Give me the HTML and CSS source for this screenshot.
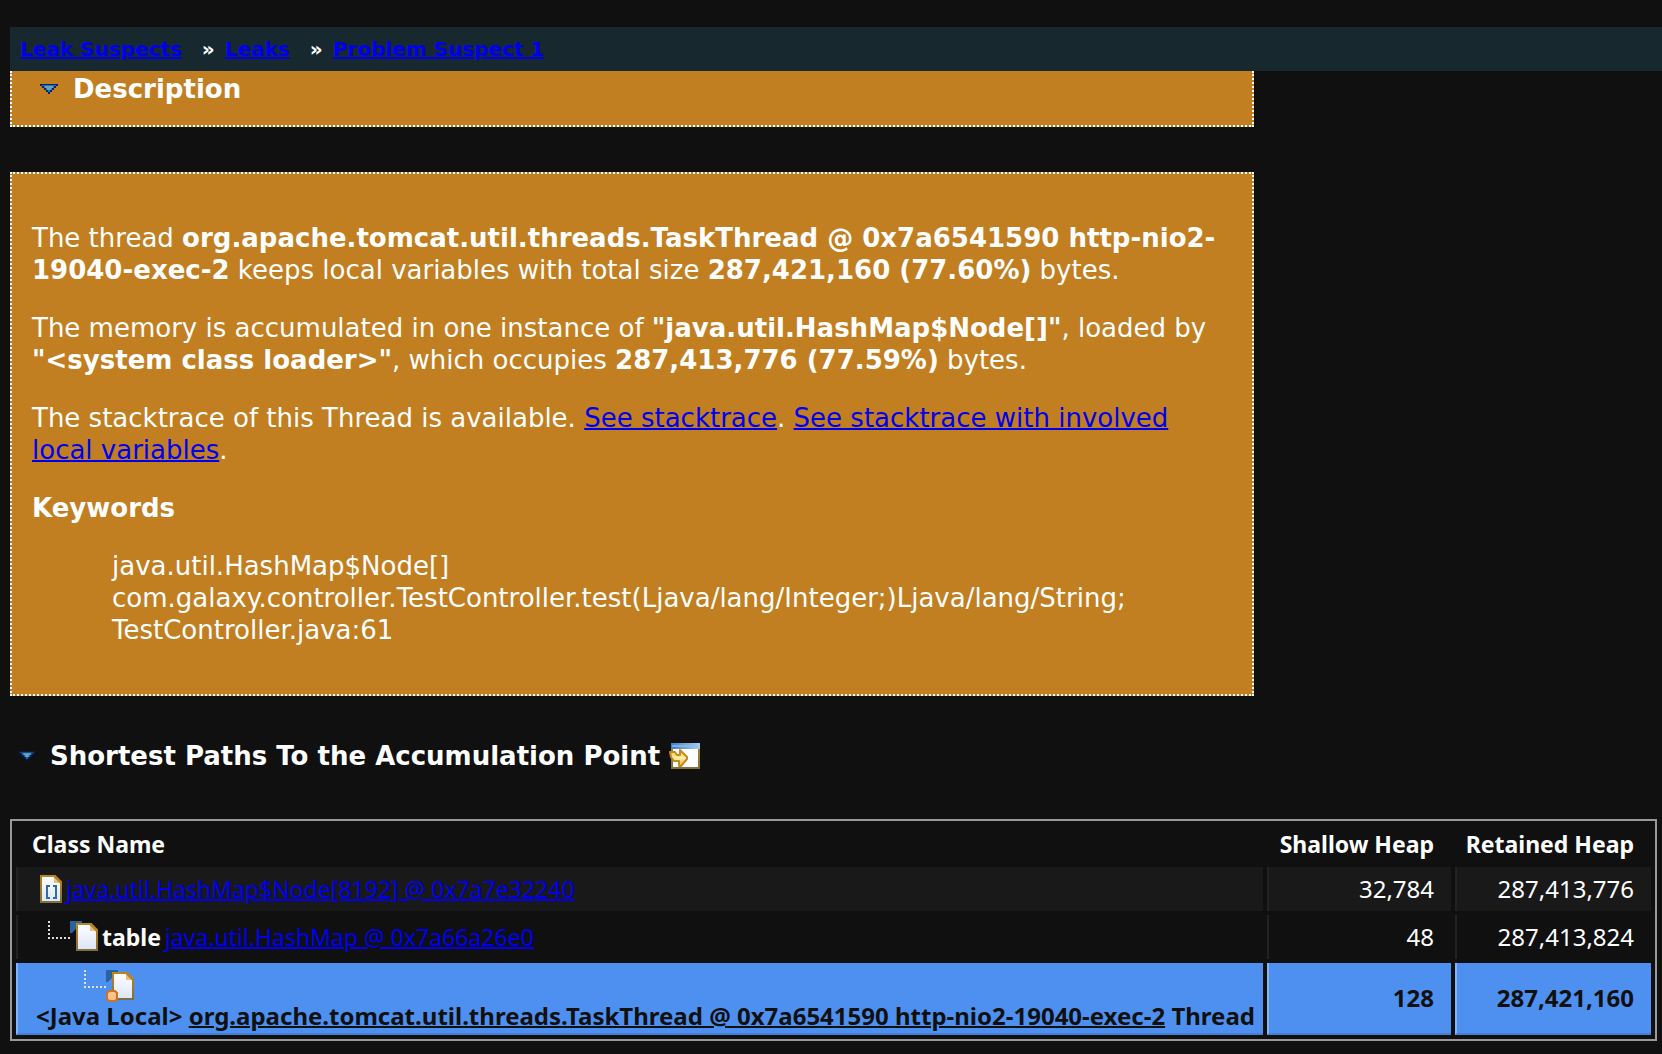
FILE: index.html
```
<!DOCTYPE html>
<html lang="en">
<head>
<meta charset="utf-8">
<title>Problem Suspect 1</title>
<link rel="stylesheet" href="styles.css">
</head>
<body>
<svg class="defs" width="0" height="0" aria-hidden="true">
  <defs>
    <linearGradient id="paper" x1="0" y1="0" x2="0" y2="1"><stop offset="0" stop-color="#fff"/><stop offset="1" stop-color="#dbe5f6"/></linearGradient>
    <linearGradient id="edge" x1="0" y1="0" x2="0" y2="1"><stop offset="0" stop-color="#b98423"/><stop offset="1" stop-color="#80703c"/></linearGradient>
    <linearGradient id="bar" x1="0" y1="0" x2="1" y2="0"><stop offset="0" stop-color="#3f7fc4"/><stop offset="1" stop-color="#a9cdf0"/></linearGradient>
    <linearGradient id="gold" x1="0" y1="0" x2="0" y2="1"><stop offset="0" stop-color="#f3c04a"/><stop offset=".5" stop-color="#fff0a8"/><stop offset="1" stop-color="#eeb43c"/></linearGradient>
    <symbol id="arrow" viewBox="0 0 18 10">
      <path d="M0 0H18V2H16V4H14V6H12V8H10V10H8V8H6V6H4V4H2V2H0Z" fill="#10206e"/>
      <path d="M2 1H16V2H14V4H12V6H10V8H8V6H6V4H4V2H2Z" fill="#2076a8"/>
      <path d="M5 2H13V4H11V6H7V4H5Z" fill="#62a6bd"/>
    </symbol>
    <symbol id="page" viewBox="0 0 22 28">
      <path d="M1 1H15L21 7V27H1Z" fill="url(#paper)" stroke="url(#edge)" stroke-width="2"/>
      <path d="M14 1V8H21Z" fill="#e6c47d"/><path d="M14 1L21 8" stroke="#b98423" stroke-width="2"/>
    </symbol>
  </defs>
</svg>

<nav class="breadcrumb" aria-label="Breadcrumb">
  <a href="#leak-suspects">Leak Suspects</a><span class="sep">»</span><a href="#leaks">Leaks</a><span class="sep">»</span><a href="#suspect">Problem Suspect 1</a>
</nav>

<main>
  <section class="important heading-box">
    <h2><svg class="arrow" width="18" height="10"><use href="#arrow"/></svg>Description</h2>
  </section>

  <section class="important details">
    <p>The thread <strong>org.apache.tomcat.util.threads.TaskThread @ 0x7a6541590 http-nio2-19040-exec-2</strong> keeps local variables with total size <strong>287,421,160 (77.60%)</strong> bytes.</p>
    <p>The memory is accumulated in one instance of <strong>"java.util.HashMap$Node[]"</strong>, loaded by <strong class="loader">"&lt;system class loader&gt;"</strong>, which occupies <strong>287,413,776 (77.59%)</strong> bytes.</p>
    <p>The stacktrace of this Thread is available. <a href="#stacktrace">See stacktrace</a>. <a href="#stacktrace-locals">See stacktrace with involved local variables</a>.</p>
    <p><strong>Keywords</strong></p>
    <blockquote>java.util.HashMap$Node[]<br>com.galaxy.controller.TestController.test(Ljava/lang/Integer;)Ljava/lang/String;<br>TestController.java:61</blockquote>
  </section>

  <h2 class="paths-title"><svg class="arrow" width="16" height="10"><use href="#arrow"/></svg>Shortest Paths To the Accumulation Point
    <a href="#open" aria-label="Open in browser"><svg class="open" width="32" height="26" viewBox="0 0 32 26">
      <rect x="3" y="1" width="27" height="24" fill="#fff" stroke="url(#edge)" stroke-width="2"/>
      <rect x="2" y="0" width="29" height="6" fill="url(#bar)"/><rect x="3" y="2" width="26" height="2" fill="#8fc0ea" opacity=".7"/>
      <path d="M1 9H6L8 12H11V7L18 14V16L12 23H10V18H5L2 14Z" fill="url(#gold)" stroke="#c58a1c" stroke-width="2" stroke-linejoin="round"/>
    </svg></a>
  </h2>

  <table>
    <colgroup><col><col class="shallow"><col class="retained"></colgroup>
    <thead><tr><th scope="col">Class Name</th><th scope="col" class="num">Shallow Heap</th><th scope="col" class="num">Retained Heap</th></tr></thead>
    <tbody>
      <tr class="odd">
        <td><div class="node"><svg width="22" height="28"><use href="#page" width="22" height="28"/><path d="M10 11H7V23H10M13 11H16V23H13" fill="none" stroke="#2f6ca3" stroke-width="2"/></svg><a href="#node">java.util.HashMap$Node[8192] @ 0x7a7e32240</a></div></td>
        <td class="num">32,784</td><td class="num">287,413,776</td>
      </tr>
      <tr>
        <td><div class="node child"><svg width="50" height="32"><path d="M1 0V18M0 17H22" fill="none" stroke="#ddd" stroke-width="2" stroke-dasharray="2 2"/><path d="M22 0H34V2L24 12H22Z" fill="#28649b"/><use href="#page" x="28" y="2" width="22" height="28"/></svg><strong>table</strong> <a href="#map">java.util.HashMap @ 0x7a66a26e0</a></div></td>
        <td class="num">48</td><td class="num">287,413,824</td>
      </tr>
      <tr class="selected">
        <td><svg class="leaf" width="50" height="32"><path d="M1 0V18M0 17H22" fill="none" stroke="#d5e4fa" stroke-width="2" stroke-dasharray="2 2"/><path d="M22 0H34V2L24 12H22Z" fill="#28649b"/><use href="#page" x="28" y="2" width="22" height="28"/><path d="M25 21H31L33 23V29L31 31H25L23 29V23Z" fill="#fcc289" stroke="#cf7221" stroke-width="2"/></svg>
          <div class="local">&lt;Java Local&gt; <a href="#thread">org.apache.tomcat.util.threads.TaskThread @ 0x7a6541590 http-nio2-19040-exec-2</a> Thread</div></td>
        <td class="num">128</td><td class="num">287,421,160</td>
      </tr>
    </tbody>
  </table>
</main>
</body>
</html>
```
FILE: styles.css
```
* { box-sizing: border-box; }

body {
  margin: 0;
  padding: 27px 0 12px 10px;
  background: #101010;
  color: #fff;
  font: 26px/32px Verdana, "DejaVu Sans", sans-serif;
}

a { color: #00e; text-decoration-thickness: 2px; }
.defs { position: absolute; }

.breadcrumb {
  display: flex;
  align-items: center;
  height: 44px;
  padding: 0 10px;
  background: #18282f;
  font-size: 20px;
  font-weight: bold;
}
.sep { padding: 0 10px 0 20px; }

.important {
  max-width: 1244px;
  border: 2px dotted #fff;
  background: #c17f21;
}
.heading-box {
  border-top: 0;
  padding: 2px 28px 20px;
}

h2 {
  display: flex;
  align-items: center;
  margin: 0;
  font-size: 26px;
  line-height: 32px;
}
.heading-box .arrow { margin-right: 15px; }

.details {
  margin-top: 45px;
  padding: 22px 20px;
}
.details p { margin: 26px 0; }
.details blockquote { margin: 26px 80px; }
.loader { white-space: nowrap; }

.paths-title { margin: 44px 0 47px; padding-left: 9px; }
.paths-title .arrow { margin-right: 15px; }
.paths-title a { display: flex; margin-left: 9px; }

table {
  width: calc(100% - 5px);
  table-layout: fixed;
  border: 2px solid #999;
  border-spacing: 4px;
  font: 23px/28px "Lucida Grande", "Noto Sans", sans-serif;
}
.shallow { width: 184px; }
.retained { width: 196px; }

th, td {
  height: 44px;
  padding: 0 17px 0 16px;
  text-align: left;
  white-space: nowrap;
}
th { height: 38px; }
td { border-left: 2px solid #222; }
.num { padding-left: 0; text-align: right; }
td.num { font-size: 24px; }
.odd td { background: #191919; }

.node { display: flex; align-items: center; margin-left: 6px; gap: 4px; }
.child { margin-left: 14px; }

.selected td {
  height: 72px;
  border-left-color: #84b4f8;
  border-bottom: 2px solid #4580d6;
  background: #4e90f0;
  color: #101010;
  font-size: 24px;
  font-weight: bold;
}
.selected a { color: #101010; }
.leaf { display: block; margin: 4px 0 0 50px; }
.local { margin: 0 2px; }
```
